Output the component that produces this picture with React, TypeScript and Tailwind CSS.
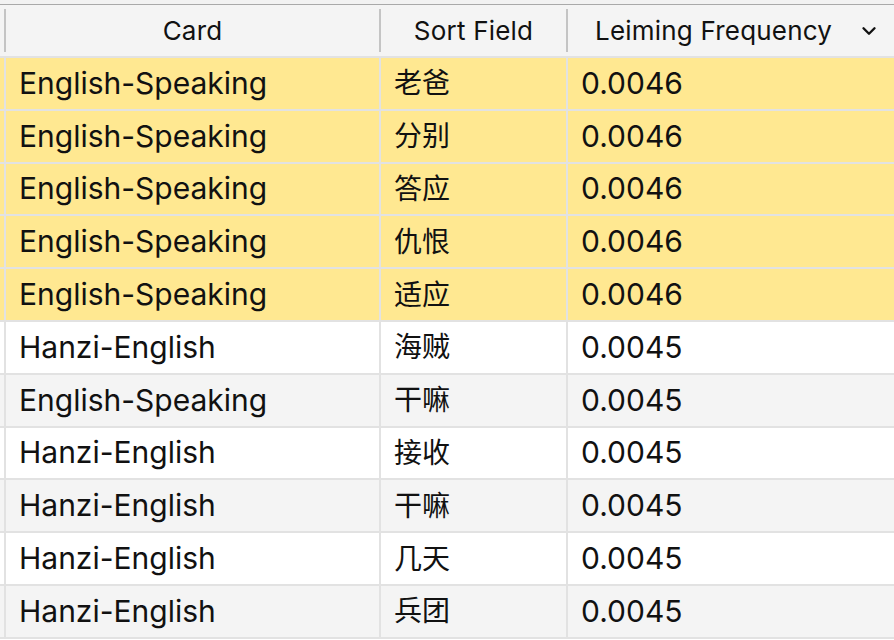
import { ChevronDown } from "lucide-react";

type Row = { card: string; sort: string; freq: string; marked?: boolean };

const rows: Row[] = [
  { card: "English-Speaking", sort: "老爸", freq: "0.0046", marked: true },
  { card: "English-Speaking", sort: "分别", freq: "0.0046", marked: true },
  { card: "English-Speaking", sort: "答应", freq: "0.0046", marked: true },
  { card: "English-Speaking", sort: "仇恨", freq: "0.0046", marked: true },
  { card: "English-Speaking", sort: "适应", freq: "0.0046", marked: true },
  { card: "Hanzi-English", sort: "海贼", freq: "0.0045" },
  { card: "English-Speaking", sort: "干嘛", freq: "0.0045" },
  { card: "Hanzi-English", sort: "接收", freq: "0.0045" },
  { card: "Hanzi-English", sort: "干嘛", freq: "0.0045" },
  { card: "Hanzi-English", sort: "几天", freq: "0.0045" },
  { card: "Hanzi-English", sort: "兵团", freq: "0.0045" },
];

const font = { fontFamily: 'Inter, "Noto Sans CJK SC", sans-serif' };

export default function App() {
  const rowBg = (row: Row, i: number) => {
    if (row.marked) return "bg-[#ffe891]";
    return i % 2 === 1 ? "bg-white" : "bg-[#f4f4f4]";
  };

  return (
    <div className="w-[894px] h-[640px] overflow-hidden bg-white text-[#111]" style={font}>
      {/* header */}
      <div className="h-[4px] bg-[#f2f2f2]" />
      <div className="flex h-[54px] bg-[#f4f4f4] border-t border-[#a9a9a9] border-b-2 border-b-[#e2e2e2] text-[26px] tracking-[0.2px]">
        <div className="w-[4px]" />
        <div className="w-[2px] my-[4px] bg-[#c4c4c4]" />
        <div className="w-[373px] flex items-center justify-center">Card</div>
        <div className="w-[2px] my-[4px] bg-[#c4c4c4]" />
        <div className="w-[185px] flex items-center justify-center">Sort Field</div>
        <div className="w-[2px] my-[4px] bg-[#c4c4c4]" />
        <div className="flex-1 flex items-center pl-[27px] pr-[14px]">
          <span className="flex-1">Leiming Frequency</span>
          <ChevronDown className="w-[22px] h-[22px]" strokeWidth={2.6} />
        </div>
      </div>

      {/* rows */}
      {rows.map((row, i) => (
        <div
          key={i}
          className={`flex h-[52.8px] border-b-2 border-[#e2e2e2] text-[30px] ${rowBg(row, i)}`}
        >
          <div className="w-[4px]" />
          <div className="w-[2px] bg-[#e2e2e2]" />
          <div className="w-[373px] flex items-center pl-[13px]">{row.card}</div>
          <div className="w-[2px] bg-[#e2e2e2]" />
          <div className="w-[185px] flex items-center pl-[13px] text-[28px]">{row.sort}</div>
          <div className="w-[2px] bg-[#e2e2e2]" />
          <div className="flex-1 flex items-center pl-[13px]">{row.freq}</div>
        </div>
      ))}
    </div>
  );
}
